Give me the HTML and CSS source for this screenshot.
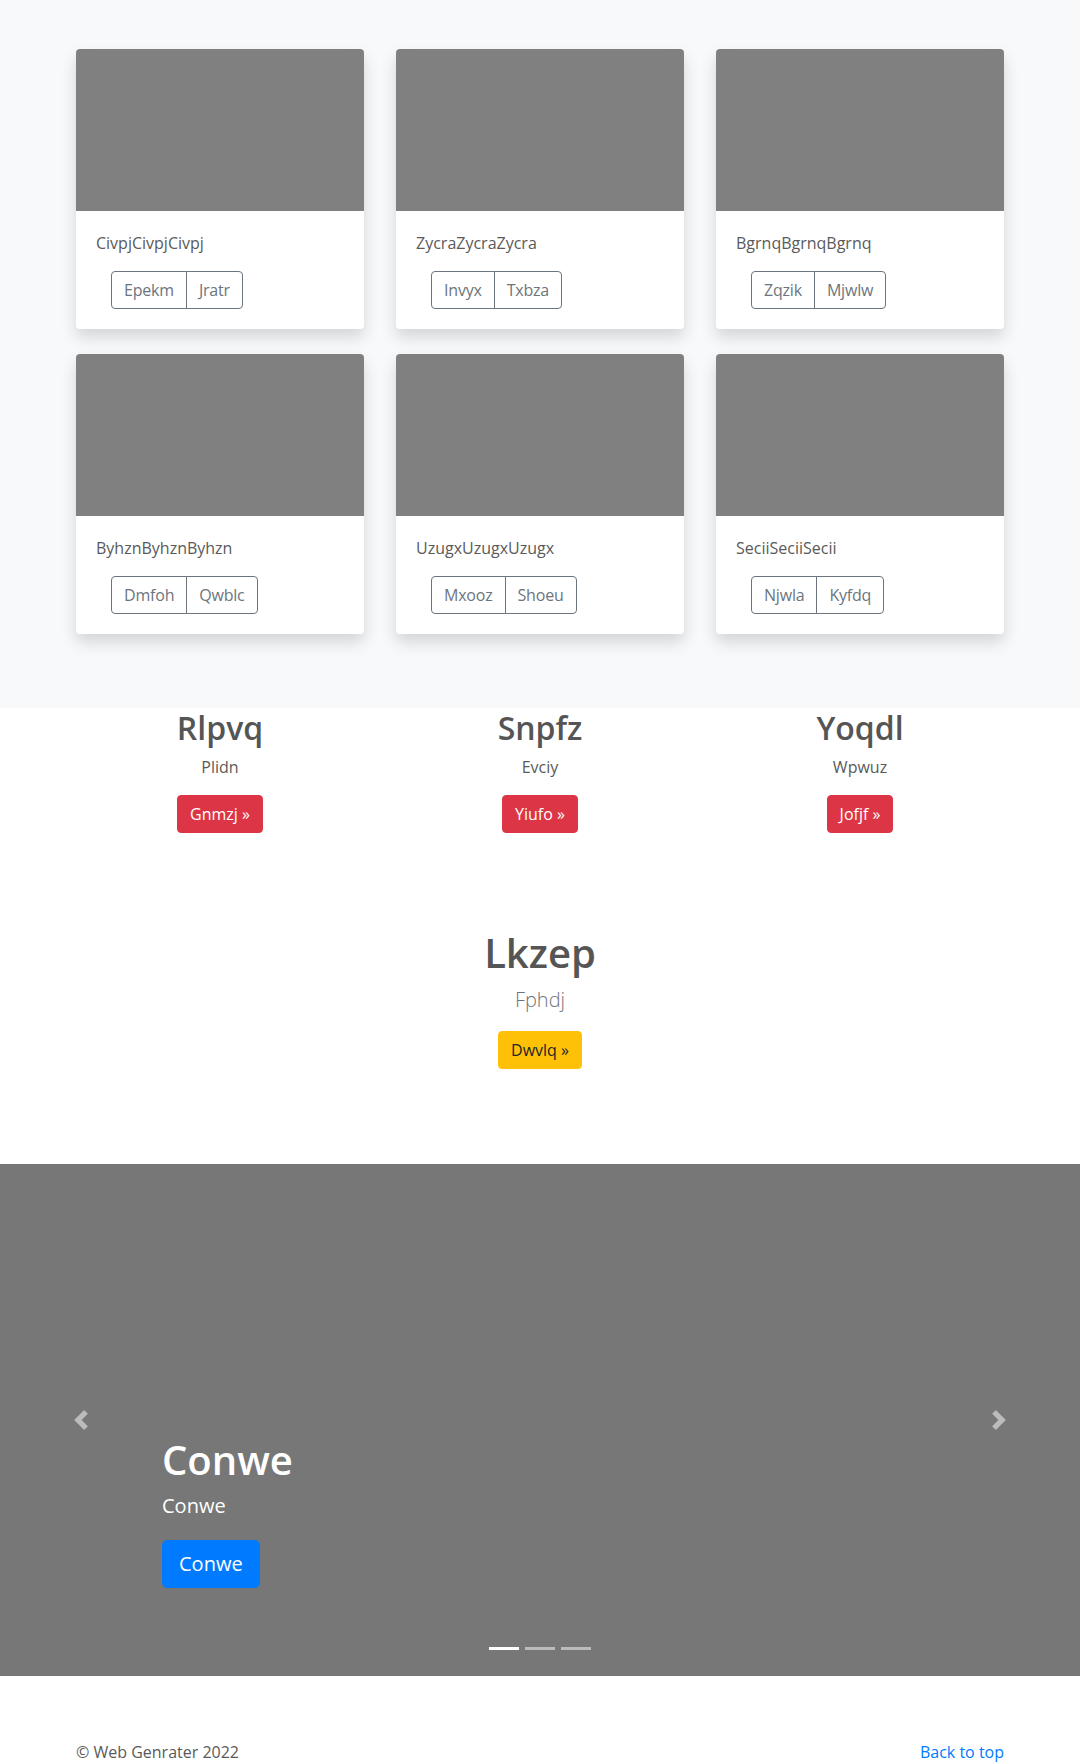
FILE: index.html
```html
<!DOCTYPE html>
<html lang="en">
<head>
<meta charset="utf-8">
<title>Album</title>
<link rel="stylesheet" href="styles.css">
</head>
<body>
<main>
  <section class="album">
    <div class="container card-grid">
      <div class="card">
        <div class="card-img"></div>
        <div class="card-body">
          <p class="card-text">CivpjCivpjCivpj</p>
          <div class="card-actions">
            <div class="btn-group"><button class="btn btn-outline">Epekm</button><button class="btn btn-outline">Jratr</button></div>
          </div>
        </div>
      </div>
      <div class="card">
        <div class="card-img"></div>
        <div class="card-body">
          <p class="card-text">ZycraZycraZycra</p>
          <div class="card-actions">
            <div class="btn-group"><button class="btn btn-outline">Invyx</button><button class="btn btn-outline">Txbza</button></div>
          </div>
        </div>
      </div>
      <div class="card">
        <div class="card-img"></div>
        <div class="card-body">
          <p class="card-text">BgrnqBgrnqBgrnq</p>
          <div class="card-actions">
            <div class="btn-group"><button class="btn btn-outline">Zqzik</button><button class="btn btn-outline">Mjwlw</button></div>
          </div>
        </div>
      </div>
      <div class="card">
        <div class="card-img"></div>
        <div class="card-body">
          <p class="card-text">ByhznByhznByhzn</p>
          <div class="card-actions">
            <div class="btn-group"><button class="btn btn-outline">Dmfoh</button><button class="btn btn-outline">Qwblc</button></div>
          </div>
        </div>
      </div>
      <div class="card">
        <div class="card-img"></div>
        <div class="card-body">
          <p class="card-text">UzugxUzugxUzugx</p>
          <div class="card-actions">
            <div class="btn-group"><button class="btn btn-outline">Mxooz</button><button class="btn btn-outline">Shoeu</button></div>
          </div>
        </div>
      </div>
      <div class="card">
        <div class="card-img"></div>
        <div class="card-body">
          <p class="card-text">SeciiSeciiSecii</p>
          <div class="card-actions">
            <div class="btn-group"><button class="btn btn-outline">Njwla</button><button class="btn btn-outline">Kyfdq</button></div>
          </div>
        </div>
      </div>
    </div>
  </section>

  <section class="marketing">
    <div class="marketing-grid">
      <div class="col">
        <h2>Rlpvq</h2>
        <p>Plidn</p>
        <a class="btn btn-danger" href="#">Gnmzj &raquo;</a>
      </div>
      <div class="col">
        <h2>Snpfz</h2>
        <p>Evciy</p>
        <a class="btn btn-danger" href="#">Yiufo &raquo;</a>
      </div>
      <div class="col">
        <h2>Yoqdl</h2>
        <p>Wpwuz</p>
        <a class="btn btn-danger" href="#">Jofjf &raquo;</a>
      </div>
    </div>
  </section>

  <section class="feature">
    <h1>Lkzep</h1>
    <p class="lead">Fphdj</p>
    <a class="btn btn-warning" href="#">Dwvlq &raquo;</a>
  </section>

  <section class="carousel">
    <ol class="indicators">
      <li class="active"></li>
      <li></li>
      <li></li>
    </ol>
    <div class="caption">
      <h1>Conwe</h1>
      <p>Conwe</p>
      <div class="caption-action"><a class="btn btn-lg btn-primary" href="#">Conwe</a></div>
    </div>
    <a class="control control-prev" href="#">
      <svg width="20" height="20" viewBox="0 0 8 8"><path fill="#fff" d="M5.25 0l-4 4 4 4 1.5-1.5L4.25 4l2.5-2.5L5.25 0z"/></svg>
    </a>
    <a class="control control-next" href="#">
      <svg width="20" height="20" viewBox="0 0 8 8"><path fill="#fff" d="M2.75 0l-1.5 1.5L3.75 4l-2.5 2.5L2.75 8l4-4-4-4z"/></svg>
    </a>
  </section>
</main>

<footer class="container footer">
  <p>&copy; Web Genrater 2022</p>
  <p><a href="#">Back to top</a></p>
</footer>
</body>
</html>
```

FILE: styles.css
```css
* {
  box-sizing: border-box;
}

html, body {
  margin: 0;
  padding: 0;
}

body {
  font-family: "Open Sans", "Noto Sans", "Liberation Sans", sans-serif;
  font-size: 16px;
  line-height: 1.5;
  color: #5a5a5a;
  background: #fff;
}

.container {
  width: 928px;
  margin: 0 auto;
}

/* Album */
.album {
  background: #f8f9fa;
  padding: 49px 0 74px;
}

.card-grid {
  display: grid;
  grid-template-columns: repeat(3, 288px);
  column-gap: 32px;
  row-gap: 25px;
}

.card {
  background: #fff;
  border-radius: 4px;
  overflow: hidden;
  box-shadow: 0 8px 16px rgba(0, 0, 0, 0.15);
}

.card-img {
  height: 162px;
  background: #808080;
}

.card-body {
  padding: 20px;
}

.card-text {
  margin: 0 0 16px;
}

.card-actions {
  display: flex;
  padding-left: 15px;
}

.btn-group {
  display: inline-flex;
}

.btn {
  display: inline-block;
  font-family: inherit;
  font-size: 16px;
  line-height: 24px;
  padding: 6px 12px;
  border: 1px solid transparent;
  border-radius: 4px;
  text-decoration: none;
  background: transparent;
  cursor: pointer;
}

.btn-outline {
  color: #6c757d;
  border-color: #6c757d;
  background: transparent;
  letter-spacing: -0.2px;
}

.btn-group .btn-outline:first-child {
  border-top-right-radius: 0;
  border-bottom-right-radius: 0;
}

.btn-group .btn-outline + .btn-outline {
  margin-left: -1px;
  border-top-left-radius: 0;
  border-bottom-left-radius: 0;
}

.btn-danger {
  color: #fff;
  background: #dc3545;
  border-color: #dc3545;
}

.btn-warning {
  color: #212529;
  background: #ffc107;
  border-color: #ffc107;
}

.btn-primary {
  color: #fff;
  background: #007bff;
  border-color: #007bff;
}

.btn-lg {
  font-size: 20px;
  line-height: 30px;
  padding: 8px 16px;
  border-radius: 5px;
}

/* Marketing */
.marketing {
  padding-top: 1px;
}

.marketing-grid {
  width: 960px;
  margin: 0 auto;
  display: grid;
  grid-template-columns: repeat(3, 320px);
  text-align: center;
}

.marketing h2 {
  font-size: 32px;
  font-weight: 600;
  line-height: 1.2;
  margin: 0 0 8px;
  color: #555;
}

.marketing p {
  margin: 0 0 16px;
}

/* Feature */
.feature {
  text-align: center;
  padding: 96px 0 95px;
}

.feature h1 {
  font-size: 40px;
  font-weight: 600;
  line-height: 1.2;
  margin: 0 0 8px;
  color: #555;
}

.lead {
  font-size: 20px;
  font-weight: 300;
  line-height: 30px;
  color: #6c757d;
  margin: 0 0 16px;
}

/* Carousel */
.carousel {
  position: relative;
  height: 512px;
  background: #777;
  margin-bottom: 64px;
}

.caption {
  position: absolute;
  left: 15%;
  right: 15%;
  bottom: 48px;
  padding: 20px 0;
  color: #fff;
  z-index: 10;
}

.caption h1 {
  font-size: 40px;
  font-weight: 600;
  line-height: 1.2;
  margin: 0 0 8px;
}

.caption p {
  font-size: 20px;
  line-height: 1.4;
  margin: 0 0 20px;
}

.caption-action {
  display: flex;
  margin-bottom: 20px;
}

.indicators {
  position: absolute;
  left: 0;
  right: 0;
  bottom: 0;
  margin: 0 0 16px;
  padding: 0;
  list-style: none;
  display: flex;
  justify-content: center;
  z-index: 15;
}

.indicators li {
  width: 30px;
  height: 23px;
  margin: 0 3px;
  border-top: 10px solid transparent;
  border-bottom: 10px solid transparent;
  background: #fff;
  background-clip: padding-box;
  opacity: 0.5;
}

.indicators li.active {
  opacity: 1;
}

.control {
  position: absolute;
  top: 0;
  bottom: 0;
  width: 15%;
  display: flex;
  align-items: center;
  justify-content: center;
  opacity: 0.5;
}

.control svg {
  display: block;
}

.control-prev {
  left: 0;
}

.control-next {
  right: 0;
}

/* Footer */
.footer {
  display: flex;
  justify-content: space-between;
  color: #5a5a5a;
}

.footer p {
  margin: 0 0 16px;
}

.footer a {
  color: #007bff;
  text-decoration: none;
}
```
